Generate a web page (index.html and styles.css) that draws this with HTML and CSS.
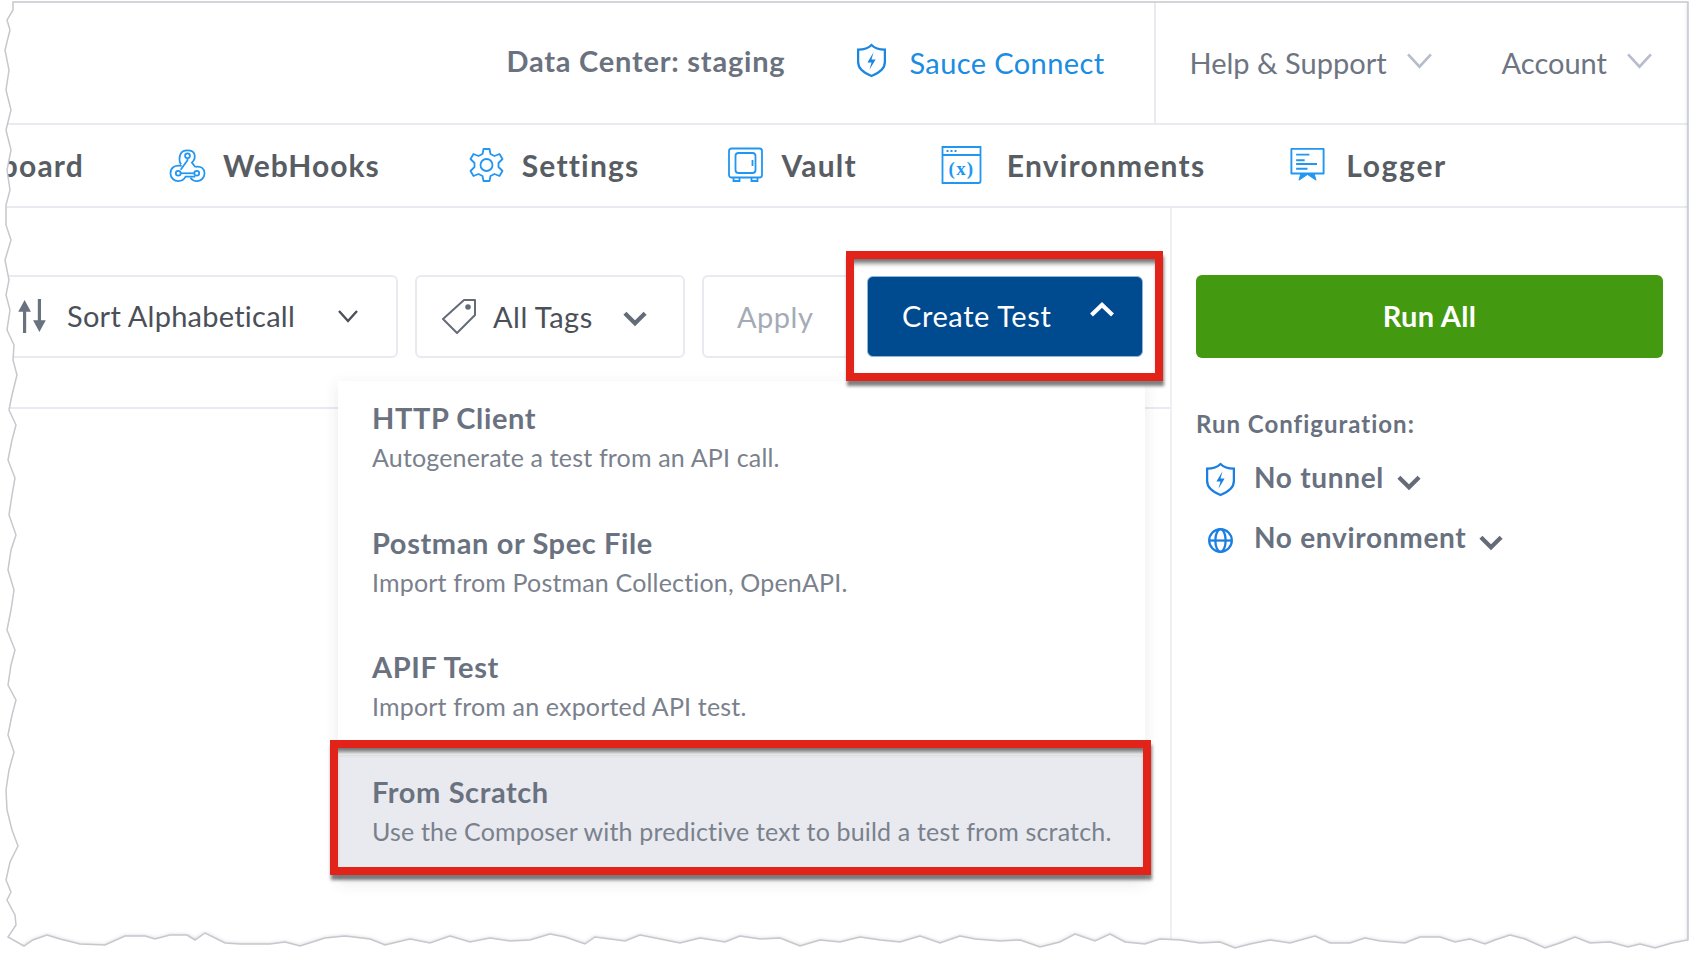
FILE: index.html
```html
<!DOCTYPE html>
<html lang="en">
<head>
<meta charset="utf-8">
<title>Create Test</title>
<link rel="stylesheet" href="styles.css">
</head>
<body>
<div class="page">
  <header class="topbar">
    <span class="datacenter">Data Center: staging</span>
    <a class="connect">
      <svg class="ic-shield" viewBox="0 0 32 34"><path d="M16 2c3 3 8 4.500 13 4.500v12c0 6-5 10.500-13 13.500C8 29 3 24.500 3 18.500v-12C8 6.500 13 5 16 2z" fill="none" stroke="#1a86e0" stroke-width="2.200"/><path d="M18 9l-6 10h4l-2 7 6-10h-4z" fill="#1a86e0"/></svg>
      <span>Sauce Connect</span>
    </a>
    <div class="usermenu">
      <a class="menu-link">Help &amp; Support<svg class="chev-thin" viewBox="0 0 26 16"><path d="M2 2l11 12L24 2" fill="none" stroke="#b6bdcc" stroke-width="2.500"/></svg></a>
      <a class="menu-link">Account<svg class="chev-thin" viewBox="0 0 26 16"><path d="M2 2l11 12L24 2" fill="none" stroke="#b6bdcc" stroke-width="2.500"/></svg></a>
    </div>
  </header>

  <nav class="tabs">
    <span class="tab first">Dashboard</span>
    <a class="tab hooks">
      <svg class="ic-nav" viewBox="0 0 38 36" fill="none" stroke="#2196f3" stroke-width="1.800"><path d="M12.500 17.500C10 15.500 10.500 9 12 6.500c2-4.500 12-5 14 0 1.500 4-.5 7-2.500 9l3.500 4.500"/><circle cx="19" cy="8.500" r="2.500"/><path d="M19 11v2l-7 10"/><path d="M13 19c-7-1.500-11.500 2-11.500 7.500 0 5 4 8 8 8 3.500 0 6-1.500 7.500-4.500h10"/><circle cx="9.500" cy="26.500" r="2.500"/><path d="M27 20c6-1.500 9.500 2 9.500 6.500 0 5-4 8-8 8-3 0-5-1.500-6.500-3.500"/><circle cx="28.500" cy="26.500" r="2.500"/><path d="M12 26.500h14"/></svg>
      <span>WebHooks</span>
    </a>
    <a class="tab">
      <svg class="ic-nav" viewBox="0 0 36 36" fill="none" stroke="#2196f3" stroke-width="1.800"><path d="M15 2h6l1 5 4 2 5-2 3 5-4 4v4l4 4-3 5-5-2-4 2-1 5h-6l-1-5-4-2-5 2-3-5 4-4v-4l-4-4 3-5 5 2 4-2z" stroke-linejoin="round"/><circle cx="18" cy="18" r="6"/></svg>
      <span>Settings</span>
    </a>
    <a class="tab">
      <svg class="ic-nav" viewBox="0 0 36 36" fill="none" stroke="#2196f3" stroke-width="1.800"><rect x="1.500" y="1.500" width="33" height="29" rx="2.500"/><rect x="8" y="6" width="20" height="20" rx="3"/><path d="M25 13v6"/><path d="M6 31v3h6v-3M24 31v3h6v-3"/></svg>
      <span>Vault</span>
    </a>
    <a class="tab envs">
      <svg class="ic-env" viewBox="0 0 40 38" fill="none" stroke="#2196f3" stroke-width="1.800"><path d="M1 1h38v34a2 2 0 0 1-2 2H1z"/><path d="M1 9h38"/><path d="M5 5h2M9 5h2M13 5h2"/><text x="20" y="29" class="env-x">(x)</text></svg>
      <span>Environments</span>
    </a>
    <a class="tab last">
      <svg class="ic-nav" viewBox="0 0 38 38" fill="none" stroke="#2196f3" stroke-width="2"><path d="M2 2h34v26H2z" stroke-linejoin="round"/><path d="M7 8h14M7 14h9M7 18h22M7 23h12"/><path d="M12 28l-2 7 9-6 9 6-2-7" fill="#2196f3" stroke-width="1"/></svg>
      <span>Logger</span>
    </a>
  </nav>

  <div class="body">
    <main class="content">
      <div class="toolbar">
        <div class="field sort">
          <svg class="ic-sort" viewBox="0 0 32 34" fill="#69727f"><path d="M9 2l6 11h-4.500v20h-3V13H3z"/><path d="M23 32l6-11h-4.500V1h-3v20H17z"/></svg>
          <span class="field-text">Sort Alphabeticall</span>
          <svg class="chev-sort" viewBox="0 0 22 14"><path d="M2 2l9 10 9-10" fill="none" stroke="#4c5159" stroke-width="2.400"/></svg>
        </div>
        <div class="field tags">
          <svg class="ic-tag" viewBox="0 0 38 36" fill="none" stroke="#646c78" stroke-width="2"><path d="M24 2h11v15L17 35 3 21z" stroke-linejoin="round"/><circle cx="28" cy="9" r="1.800" fill="#646c78"/></svg>
          <span class="field-text">All Tags</span>
          <svg class="chev-bold" viewBox="0 0 24 16"><path d="M2.500 3l9.500 9.500L21.500 3" fill="none" stroke="#646c78" stroke-width="4"/></svg>
        </div>
        <div class="field apply">Apply</div>
        <button class="btn-create">
          <span>Create Test</span>
          <svg class="chev-up" viewBox="0 0 26 16"><path d="M2.500 13L13 3l10.500 10" fill="none" stroke="#fff" stroke-width="4.200"/></svg>
        </button>
      </div>

      <div class="dropdown">
        <div class="opt"><div class="opt-title">HTTP Client</div><div class="opt-desc">Autogenerate a test from an API call.</div></div>
        <div class="opt"><div class="opt-title">Postman or Spec File</div><div class="opt-desc">Import from Postman Collection, OpenAPI.</div></div>
        <div class="opt"><div class="opt-title">APIF Test</div><div class="opt-desc">Import from an exported API test.</div></div>
        <div class="opt active"><div class="opt-title">From Scratch</div><div class="opt-desc">Use the Composer with predictive text to build a test from scratch.</div></div>
      </div>
      <div class="callout callout-btn"></div>
      <div class="callout callout-opt"></div>
    </main>

    <aside class="side">
      <button class="btn-run">Run All</button>
      <div class="cfg-label">Run Configuration:</div>
      <div class="cfg-row">
        <svg class="ic-cfg" viewBox="0 0 32 34"><path d="M16 2c3 3 8 4.500 13 4.500v12c0 6-5 10.500-13 13.500C8 29 3 24.500 3 18.500v-12C8 6.500 13 5 16 2z" fill="none" stroke="#1a7fe0" stroke-width="2.200"/><path d="M18 9l-6 10h4l-2 7 6-10h-4z" fill="#1a7fe0"/></svg>
        <span>No tunnel</span>
        <svg class="chev-cfg" viewBox="0 0 24 16"><path d="M2.500 3l9.500 9.500L21.500 3" fill="none" stroke="#646c78" stroke-width="4"/></svg>
      </div>
      <div class="cfg-row">
        <svg class="ic-cfg" viewBox="0 0 32 34" fill="none" stroke="#1a7fe0" stroke-width="2.200"><circle cx="16" cy="18" r="11"/><ellipse cx="16" cy="18" rx="5" ry="11"/><path d="M5 18h22"/></svg>
        <span>No environment</span>
        <svg class="chev-cfg" viewBox="0 0 24 16"><path d="M2.500 3l9.500 9.500L21.500 3" fill="none" stroke="#646c78" stroke-width="4"/></svg>
      </div>
    </aside>
  </div>

  <svg class="tear" viewBox="0 0 1696 960">
    <defs><filter id="soft" x="-5%" y="-5%" width="110%" height="110%"><feGaussianBlur stdDeviation="2"/></filter></defs>
    <path class="tear-shadow" d="M1690 2V942L1670 946L1655 950L1640 946L1628 949L1610 944L1590 945L1575 939L1560 945L1545 950L1525 941L1510 937L1495 942L1485 946L1470 941L1455 944L1440 939L1420 939L1405 945L1380 943L1365 940L1350 945L1330 945L1315 938L1290 945L1270 942L1250 946L1235 950L1220 944L1200 945L1180 942L1160 941L1145 946L1125 944L1110 936L1095 943L1075 936L1060 944L1040 949L1020 942L1000 943L975 941L960 938L940 945L920 938L900 944L880 942L860 939L840 944L820 942L800 948L780 940L760 941L740 938L725 944L700 940L680 945L660 941L640 937L625 943L595 939L585 946L565 939L550 936L530 942L510 943L490 940L470 944L450 938L430 945L410 941L385 947L370 941L345 938L325 940L300 948L285 944L270 946L240 946L225 945L205 935L195 942L187 937L170 937L155 941L145 938L125 938L105 947L80 946L60 941L47 937L33 942L24 948"/>
    <path class="tear-edge" d="M-10 -10H1706V970H-10Z M13 2H1688V940L1672 943L1655 948L1640 944L1628 947L1610 942L1590 943L1575 937L1560 943L1545 948L1525 939L1510 935L1495 940L1485 944L1470 939L1455 942L1440 937L1420 937L1405 943L1380 941L1365 938L1350 943L1330 943L1315 936L1290 943L1270 940L1250 944L1235 948L1220 942L1200 943L1180 940L1160 939L1145 944L1125 942L1110 934L1095 941L1075 934L1060 942L1040 947L1020 940L1000 941L975 939L960 936L940 943L920 936L900 942L880 940L860 937L840 942L820 940L800 946L780 938L760 939L740 936L725 942L700 938L680 943L660 939L640 935L625 941L595 937L585 944L565 937L550 934L530 940L510 941L490 938L470 942L450 936L430 943L410 939L385 945L370 939L345 936L325 938L300 946L285 942L270 944L240 944L225 943L205 933L195 940L187 935L170 935L155 939L145 936L125 936L105 945L80 944L60 939L47 935L33 940L24 946L8 937L16 925L15 915L7 900L11 892L6 880L10 862L18 846L12 830L7 810L6 790L9 770L14 752L8 735L12 715L16 700L8 685L11 665L15 650L7 630L11 610L14 590L8 570L11 550L16 535L9 515L12 495L15 478L8 460L12 440L16 425L9 410L12 395L17 375L13 360L14 345L7 330L10 310L6 295L9 280L5 260L11 240L6 225L6 205L10 190L7 170L11 150L6 130L11 110L6 90L9 70L5 50L10 30L7 20L13 10Z"/>
  </svg>
</div>
</body>
</html>
```
FILE: styles.css
```css
* { box-sizing: border-box; }
html, body { margin: 0; padding: 0; background: #fff; }
body { font-family: Lato, "Open Sans", sans-serif; overflow: hidden; }
.page { position: relative; width: 1696px; height: 960px; overflow: hidden; }
.page > header, .page > nav, .page > .body { width: 1688px; }

.topbar { display: flex; align-items: center; justify-content: flex-end; height: 125px; border-bottom: 2px solid #e8eaf0; }
.datacenter { font-size: 29px; font-weight: 700; color: #6a7280; margin-right: 70px; letter-spacing: .78px; padding-bottom: 3px; }
.connect { display: flex; align-items: center; gap: 21px; font-size: 29px; color: #1a8ce2; margin-right: 50px; letter-spacing: .4px; padding-top: 2px; }
.ic-shield { width: 33px; height: 35px; margin-bottom: 5px; }
.usermenu { display: flex; align-items: center; height: 100%; border-left: 2px solid #e8eaf0; padding: 2px 35px 0 33px; gap: 69px; }
.menu-link { display: flex; align-items: center; gap: 19px; font-size: 29px; color: #6e7582; letter-spacing: 0; }
.chev-thin { width: 27px; height: 17px; margin-bottom: 4px; }

.tabs { display: flex; align-items: center; justify-content: flex-end; height: 83px; border-bottom: 2px solid #e8eaf0; padding: 0 241px 2px 0; gap: 88px; overflow: hidden; }
.tab { display: flex; align-items: center; gap: 17px; flex: none; font-size: 30px; font-weight: 700; color: #585d64; letter-spacing: 1.2px; }
.hooks { letter-spacing: 1px; margin-left: -3px; }
.envs { margin-left: -4px; }
.last { margin-left: -4px; gap: 20px; letter-spacing: 1.7px; }
.ic-nav { width: 37px; height: 36px; }
.ic-env { width: 41px; height: 38px; margin-right: 8px; }
.env-x { font: 700 19px "Liberation Serif", serif; fill: #2196f3; stroke: none; text-anchor: middle; }

.body { display: flex; height: 753px; }
.content { position: relative; width: 1170px; flex: none; }
.toolbar { display: flex; align-items: center; gap: 17px; height: 201px; border-bottom: 2px solid #e8eaf0; padding-top: 17px; }
.field { display: flex; align-items: center; height: 83px; border: 2px solid #e8eaf0; border-radius: 6px; flex: none; font-size: 29px; color: #4b5058; letter-spacing: .25px; }
.sort { width: 398px; padding-left: 13px; }
.ic-sort { width: 34px; height: 36px; }
.sort .field-text { margin-left: 18px; width: 229px; padding-bottom: 2px; white-space: nowrap; overflow: hidden; }
.chev-sort { width: 22px; height: 14px; margin-left: 41px; }
.tags { width: 270px; padding-left: 23px; }
.ic-tag { width: 38px; height: 36px; }
.tags .field-text { margin-left: 15px; letter-spacing: .5px; }
.chev-bold { width: 26px; height: 17px; margin-left: 29px; margin-top: 4px; }
.apply { width: 150px; padding: 0 0 0 33px; color: #a5abb6; letter-spacing: .5px; }
.btn-create { display: flex; align-items: center; justify-content: space-between; width: 276px; height: 81px; margin-left: -2px; flex: none; position: relative; z-index: 2; padding: 0 27px 0 34px; background: #004a8f; border: 1px solid #8db5dd; border-radius: 6px; color: #fff; font: 400 29px Lato, sans-serif; letter-spacing: .6px; }
.btn-create span { padding-bottom: 2px; }
.chev-up { width: 26px; height: 16px; margin-bottom: 12px; }

.dropdown { position: absolute; left: 338px; top: 173px; width: 807px; background: #fff; box-shadow: 0 4px 14px rgba(40, 50, 70, .1); }
.opt { height: 124.500px; padding: 19px 34px 0; }
.opt-title { font-size: 29px; font-weight: 700; color: #6a7280; line-height: 36px; letter-spacing: .6px; }
.opt-desc { font-size: 25px; color: #7a818d; line-height: 36px; margin-top: 3px; letter-spacing: .17px; white-space: nowrap; }
.active { background: #e8eaef; }
.callout { position: absolute; z-index: 3; border: 8px solid #e2231a; box-shadow: 1px 5px 3px rgba(60, 60, 60, .65), inset 0 7px 5px -3px rgba(60, 60, 60, .75); pointer-events: none; }
.callout-btn { left: 846px; top: 43px; width: 317px; height: 130px; }
.callout-opt { left: 330px; top: 532px; width: 821px; height: 135px; }

.side { flex: 1; border-left: 2px solid #eef0f4; padding: 67px 25px 0 24px; }
.btn-run { display: block; width: 467px; height: 83px; padding: 0 0 3px; background: #43990f; border: 0; border-radius: 6px; color: #fff; font: 700 29px Lato, sans-serif; letter-spacing: .3px; }
.cfg-label { margin-top: 50px; font-size: 24px; font-weight: 700; color: #697180; line-height: 32px; letter-spacing: 1px; }
.cfg-row { display: flex; align-items: center; height: 60px; font-size: 28px; font-weight: 700; color: #697180; letter-spacing: .7px; }
.cfg-label + .cfg-row { margin-top: 7px; }
.ic-cfg { width: 33px; height: 35px; margin: 4px 17px 0 8px; }
.chev-cfg { width: 26px; height: 17px; margin: 10px 0 0 12px; }

.tear { position: absolute; inset: 0; width: 1696px; height: 960px; z-index: 5; pointer-events: none; }
.tear-shadow { fill: none; stroke: #b4b7bd; stroke-width: 3; filter: url(#soft); }
.tear-edge { fill: #fff; fill-rule: evenodd; stroke: #c6c8cd; stroke-width: 1.500; }
```
